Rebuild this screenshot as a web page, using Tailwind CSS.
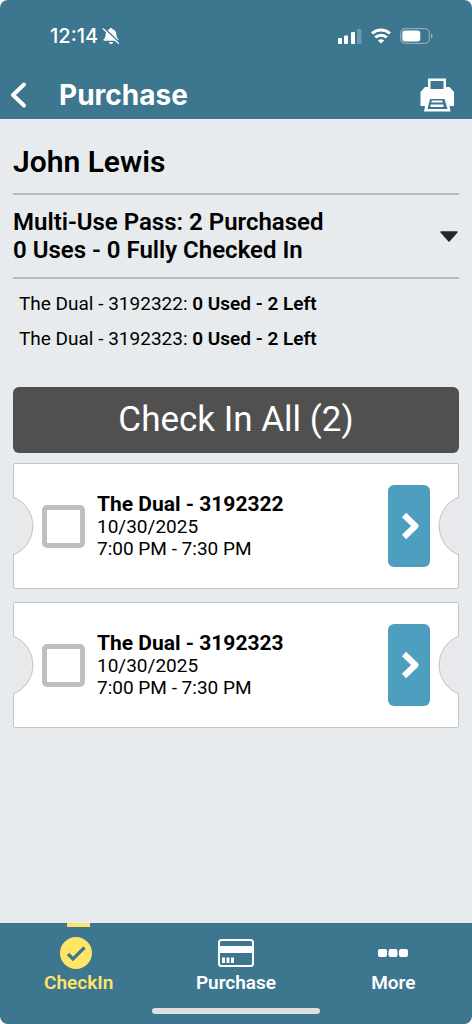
<!DOCTYPE html>
<html lang="en">
<head>
<meta charset="utf-8">
<meta name="viewport" content="width=device-width, initial-scale=1">
<title>Purchase</title>
<script src="https://cdn.jsdelivr.net/npm/@tailwindcss/browser@4"></script>
</head>
<body class="bg-white font-[Roboto,'Liberation_Sans',sans-serif] text-black">
<div class="flex min-h-screen flex-col overflow-hidden rounded-lg bg-[#e7ebee]">

  <header class="bg-[#3d768f] text-white">
    <div class="flex h-[71px] items-center justify-between pl-[50px] pr-[39px]">
      <div class="flex items-center gap-1">
        <span class="font-[Inter,sans-serif] text-xl leading-6 font-medium">12:14</span>
        <svg class="h-[18px] w-[18px]" viewBox="0 0 18 18" fill="none" aria-label="Silent">
          <path d="M9 1c.9 0 1.500.6 1.600 1.300 2.300.7 3.600 2.400 3.700 4.700.1 2.900.8 4 1.900 5.100.7.800.4 1.700-.6 1.700H2.400c-1 0-1.300-.9-.6-1.700C2.900 11 3.600 9.900 3.700 7c.1-2.300 1.400-4 3.700-4.700C7.500 1.600 8.100 1 9 1z" fill="#fff"/>
          <path d="M6.800 15h4.400c-.3 1.200-1.100 1.900-2.200 1.900S7.100 16.200 6.800 15z" fill="#fff"/>
          <path d="M1.800.8 17.400 15.600" stroke="#3d768f" stroke-width="1.600"/>
          <path d="M1.200 1.700 16.400 16.300" stroke="#fff" stroke-width="1.200" stroke-linecap="round"/>
        </svg>
      </div>
      <div class="flex items-center gap-[9px]">
        <svg class="h-4 w-6" viewBox="0 0 24 16" fill="#fff" aria-label="Signal">
          <rect x="0" y="10" width="4" height="6" rx="1"/>
          <rect x="6" y="7.500" width="4" height="8.500" rx="1"/>
          <rect x="13" y="4" width="4" height="12" rx="1"/>
          <rect x="19" y="1" width="4.500" height="15" rx="1" opacity=".25"/>
        </svg>
        <svg class="h-4 w-5" viewBox="0 0 20 16" fill="none" stroke="#fff" stroke-width="3" aria-label="Wi-Fi">
          <path d="M1 5.500C6 .9 14 .9 19 5.500"/>
          <path d="M4.200 9.400c3.300-3 8.300-3 11.600 0"/>
          <path d="M10 15.600 6.900 12.500c1.800-1.600 4.400-1.600 6.200 0z" fill="#fff" stroke="none"/>
        </svg>
        <svg class="h-4 w-[33px]" viewBox="0 0 33 16" fill="none" aria-label="Battery">
          <rect x=".7" y=".7" width="28.600" height="14.600" rx="4.500" stroke="#fff" stroke-opacity=".4" stroke-width="1.200"/>
          <rect x="2.300" y="2.500" width="18" height="11" rx="3" fill="#fff"/>
          <path d="M31 5.500c2 .8 2 4.200 0 5z" fill="#fff" fill-opacity=".5"/>
        </svg>
      </div>
    </div>
    <div class="flex h-12 items-center pr-[18px] pl-[10px]">
      <button type="button" aria-label="Back" class="mr-[31px]">
        <svg class="h-7 w-[18px]" viewBox="0 0 18 28" fill="none" stroke="#fff" stroke-width="4" stroke-linecap="round" stroke-linejoin="round"><path d="M14 3.500 3 14 14 24.500"/></svg>
      </button>
      <h1 class="flex-1 font-[Inter,sans-serif] text-[28px] leading-8 font-bold">Purchase</h1>
      <button type="button" aria-label="Print">
        <svg class="h-[34px] w-[34px]" viewBox="0 0 34 34" fill="#fff">
          <path fill-rule="evenodd" d="M8 .5h18V9h3.500l4.500 5v14h-4.500l1 5.500H4l1-5.500H.5V14L5 9h3zM10.500 3v8h13V3zM10 21 7.500 31h20L24.500 21z"/>
          <path d="M11.500 22.500h11v2h-11zM10.500 26.500h13v2.500h-13z"/>
        </svg>
      </button>
    </div>
  </header>

  <main class="flex-1 px-[13px]">
    <h2 class="border-b-2 border-[#bbbec0] pt-[27px] pb-[15px] text-3xl leading-8 font-semibold">John Lewis</h2>
    <button type="button" aria-expanded="true" class="flex w-full items-center justify-between border-b-2 border-[#bbbec0] py-[13px] text-left">
      <span class="text-2xl leading-7 font-semibold">Multi-Use Pass: 2 Purchased<br>0 Uses - 0 Fully Checked In</span>
      <svg class="h-[11px] w-5" viewBox="0 0 20 11"><path d="M2 1h16L10 10z" fill="#222827" stroke="#222827" stroke-width="1.500" stroke-linejoin="round"/></svg>
    </button>
    <ul class="px-[6px] pt-[7px] text-[19px] leading-[35px]">
      <li>The Dual - 3192322: <b class="font-semibold">0 Used - 2 Left</b></li>
      <li>The Dual - 3192323: <b class="font-semibold">0 Used - 2 Left</b></li>
    </ul>
    <button type="button" class="mt-[31px] h-[66px] w-full rounded-md bg-[#505050] text-[35px] text-white">Check In All (2)</button>

    <section class="mt-[10px] flex flex-col gap-[13px]">
      <article class="relative flex h-[126px] items-center rounded-xs border border-[#c0c4c7] bg-white pr-7 pl-7">
        <svg class="absolute top-8 -left-px h-[60px] w-[21px]" viewBox="0 0 21 60"><path d="M0 1A31 31 0 0 1 0 59z" fill="#e9e9eb"/><path d="M0 1A31 31 0 0 1 0 59" fill="none" stroke="#c0c4c7"/></svg>
        <svg class="absolute top-8 -right-px h-[60px] w-[21px]" viewBox="0 0 21 60"><path d="M21 1A31 31 0 0 0 21 59z" fill="#e9e9eb"/><path d="M21 1A31 31 0 0 0 21 59" fill="none" stroke="#c0c4c7"/></svg>
        <input id="t1" type="checkbox" class="size-[43px] appearance-none rounded-[5px] border-[5px] border-[#bfbfbf] bg-white checked:bg-[#4e9fbf]">
        <label for="t1" class="ml-3 flex-1 text-[19px] leading-[22px]"><b class="block text-[21px] leading-6 font-bold">The Dual - 3192322</b>10/30/2025<br>7:00 PM - 7:30 PM</label>
        <button type="button" aria-label="Open The Dual 3192322" class="flex h-[82px] w-[42px] items-center justify-center rounded-md bg-[#4e9fbf]">
          <svg class="ml-[3px] h-7 w-5" viewBox="0 0 20 28" fill="none" stroke="#fff" stroke-width="6"><path d="M3 3 14.500 14 3 25" stroke-linejoin="round"/></svg>
        </button>
      </article>
      <article class="relative flex h-[126px] items-center rounded-xs border border-[#c0c4c7] bg-white pr-7 pl-7">
        <svg class="absolute top-8 -left-px h-[60px] w-[21px]" viewBox="0 0 21 60"><path d="M0 1A31 31 0 0 1 0 59z" fill="#e9e9eb"/><path d="M0 1A31 31 0 0 1 0 59" fill="none" stroke="#c0c4c7"/></svg>
        <svg class="absolute top-8 -right-px h-[60px] w-[21px]" viewBox="0 0 21 60"><path d="M21 1A31 31 0 0 0 21 59z" fill="#e9e9eb"/><path d="M21 1A31 31 0 0 0 21 59" fill="none" stroke="#c0c4c7"/></svg>
        <input id="t2" type="checkbox" class="size-[43px] appearance-none rounded-[5px] border-[5px] border-[#bfbfbf] bg-white checked:bg-[#4e9fbf]">
        <label for="t2" class="ml-3 flex-1 text-[19px] leading-[22px]"><b class="block text-[21px] leading-6 font-bold">The Dual - 3192323</b>10/30/2025<br>7:00 PM - 7:30 PM</label>
        <button type="button" aria-label="Open The Dual 3192323" class="flex h-[82px] w-[42px] items-center justify-center rounded-md bg-[#4e9fbf]">
          <svg class="ml-[3px] h-7 w-5" viewBox="0 0 20 28" fill="none" stroke="#fff" stroke-width="6"><path d="M3 3 14.500 14 3 25" stroke-linejoin="round"/></svg>
        </button>
      </article>
    </section>
  </main>

  <footer class="bg-[#3d768f] pb-[10px]">
    <nav class="grid grid-cols-3 text-[19px] leading-6 font-semibold text-white">
      <a href="#checkin" class="flex flex-col items-center text-[#ffe566]">
        <span class="h-1 w-[23px] bg-[#ffe566]"></span>
        <svg class="mt-[10px] mr-[5px] size-8" viewBox="0 0 32 32"><circle cx="16" cy="16" r="16" fill="#ffe566"/><path d="m8 17 5 5L24.500 10.500" fill="none" stroke="#3d768f" stroke-width="3.200"/></svg>
        <span class="mt-[2px]">CheckIn</span>
      </a>
      <a href="#purchase" class="flex flex-col items-center pt-[14px]">
        <svg class="h-8 w-9" viewBox="0 0 36 32" fill="#fff"><rect x="1" y="3" width="34" height="26" rx="2.500" fill="none" stroke="#fff" stroke-width="2"/><path d="M1 9h34v7H1zM4 20.500h3V26H4zM8.500 20.500h3V26h-3zM13 20.500h3V26h-3z"/></svg>
        <span class="mt-[2px]">Purchase</span>
      </a>
      <a href="#more" class="flex flex-col items-center pt-[14px]">
        <svg class="h-8 w-[30px]" viewBox="0 0 30 32" fill="#fff"><rect x="0" y="12" width="9" height="8" rx="2"/><rect x="10.500" y="12" width="9" height="8" rx="2"/><rect x="21" y="12" width="9" height="8" rx="2"/></svg>
        <span class="mt-[2px]">More</span>
      </a>
    </nav>
    <div class="mx-auto mt-[13px] h-[6px] w-[168px] rounded-full bg-[#dedede]"></div>
  </footer>
</div>
</body>
</html>
